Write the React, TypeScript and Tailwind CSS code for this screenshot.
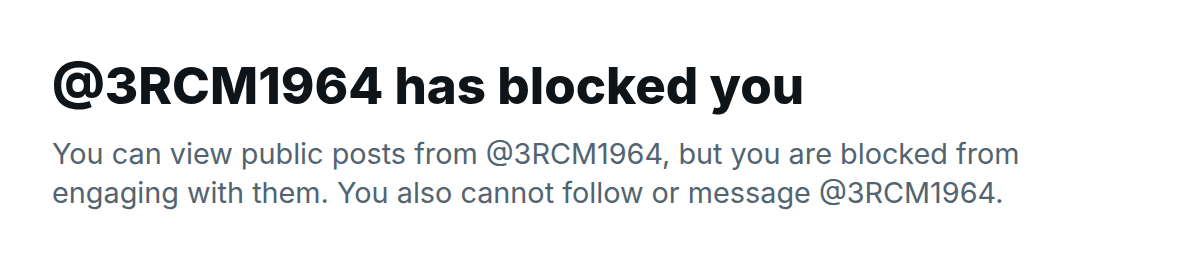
export default function App() {
    return (
        <div className="w-[1182px] h-[278px] bg-white px-[52px] pt-[55px]" style={{ fontFamily: 'Inter, "Liberation Sans", sans-serif' }}>
            <h1 className="text-[51px] leading-[62px] font-extrabold text-[#0f1419]">@3RCM1964 has blocked you</h1>
            <p className="mt-[17px] text-[28.8px] leading-[39px] text-[#536471] max-w-[1000px]">
                You can view public posts from @3RCM1964, but you are blocked from engaging with them. You also cannot follow or message @3RCM1964.
            </p>
        </div>
    );
}
